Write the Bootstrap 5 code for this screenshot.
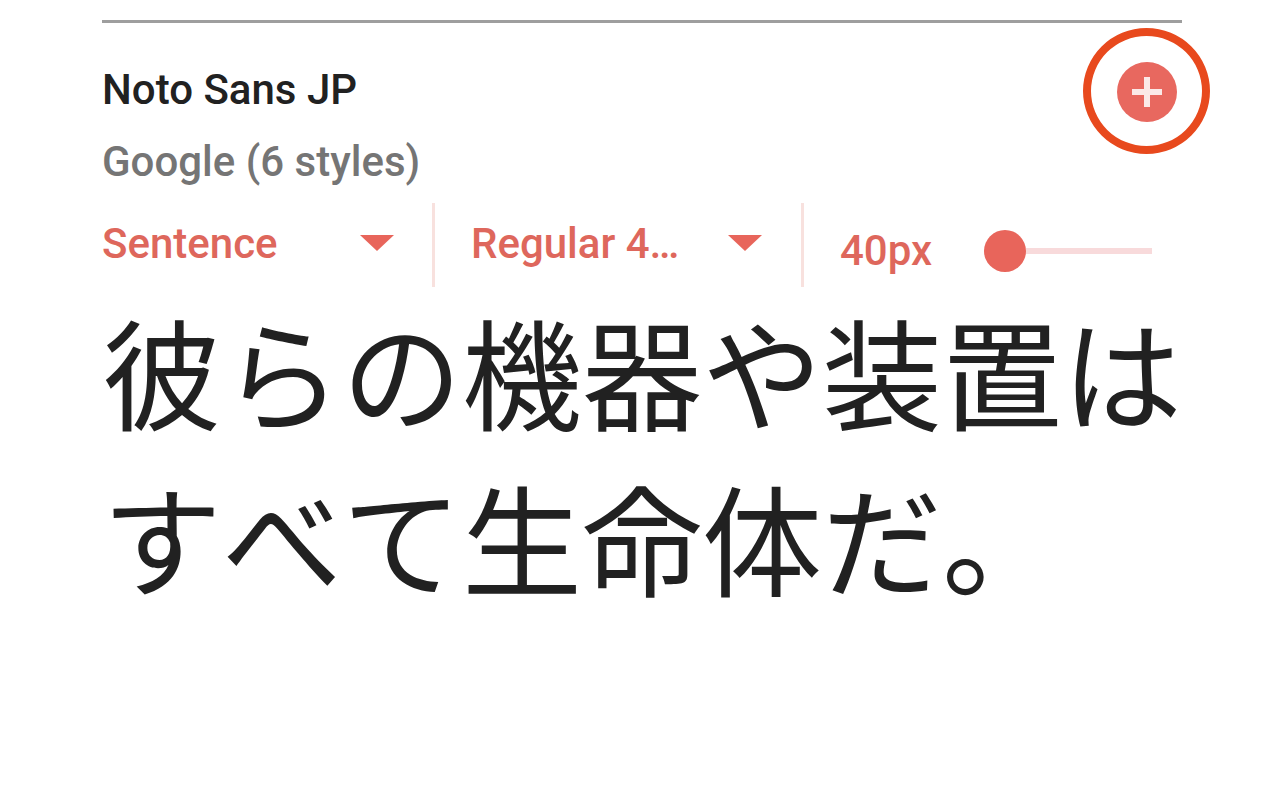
<!DOCTYPE html>
<html lang="ja">
<head>
  <meta charset="UTF-8" />
  <title>Noto Sans JP</title>
  <link href="https://cdn.jsdelivr.net/npm/bootstrap@5.3.0/dist/css/bootstrap.min.css" rel="stylesheet">
  <style>
    body { background: #fff; font-family: Roboto, sans-serif; overflow: hidden; }
    .font-card { width: 1080px; margin-left: 102px; margin-top: 20px; border-top: 3px solid #9e9e9e; }
    .font-info { padding-top: 45px; }
    .font-name { font-size: 42px; font-weight: 500; color: #212121; line-height: 44px; }
    .font-foundry { font-size: 42px; font-weight: 500; color: #757575; line-height: 44px; margin-top: 28px; }
    .add-ring { width: 127px; height: 126px; border: 8px solid #e8491d; border-radius: 50%; margin-right: -28px; margin-top: 5px; }
    .add-btn { width: 60px; height: 60px; background: #e8685f; border-radius: 50%; margin-top: 2px; }
    .ctrl-row { height: 84px; color: #de675c; font-size: 42px; font-weight: 500; margin-top: 19px; }
    .ctrl-cell { height: 84px; border-right: 3px solid #f8e1de; }
    .ctrl-case { width: 333px; padding-right: 38px; }
    .ctrl-weight { width: 369px; padding-left: 36px; padding-right: 39px; }
    .ctrl-label { margin-bottom: 4px; }
    .ctrl-size { padding-left: 36px; }
    .size-label { margin-top: 10px; }
    .caret-down { width: 0; height: 0; border-left: 17px solid transparent; border-right: 17px solid transparent; border-top: 16px solid #e8655b; margin-bottom: 4px; }
    .slider-dot { width: 42px; height: 42px; background: #e8655b; border-radius: 50%; margin-left: 52px; margin-top: 12px; }
    .slider-line { width: 126px; height: 6px; background: #f8dadb; margin-top: 12px; }
    .preview-text { font-family: "Noto Sans CJK JP", sans-serif; font-size: 120px; line-height: 166px; color: #212121; margin: 0; white-space: nowrap; font-kerning: none; }
  </style>
</head>
<body>
  <div class="font-card">
    <div class="d-flex justify-content-between align-items-start">
      <div class="font-info">
        <div class="font-name">Noto Sans JP</div>
        <div class="font-foundry">Google (6 styles)</div>
      </div>
      <div class="add-ring d-flex align-items-center justify-content-center">
        <div class="add-btn d-flex align-items-center justify-content-center">
          <svg width="30" height="30" viewBox="0 0 30 30"><path d="M15 0v30M0 15h30" stroke="#fbe9e7" stroke-width="6"/></svg>
        </div>
      </div>
    </div>
    <div class="ctrl-row d-flex align-items-center">
      <div class="ctrl-cell ctrl-case d-flex align-items-center justify-content-between"><span class="ctrl-label">Sentence</span><span class="caret-down"></span></div>
      <div class="ctrl-cell ctrl-weight d-flex align-items-center justify-content-between"><span class="ctrl-label">Regular 4…</span><span class="caret-down"></span></div>
      <div class="ctrl-size d-flex align-items-center"><span class="size-label">40px</span><span class="slider-dot"></span><span class="slider-line"></span></div>
    </div>
    <p class="preview-text">彼らの機器や装置は<br>すべて生命体だ。</p>
  </div>
</body>
</html>
